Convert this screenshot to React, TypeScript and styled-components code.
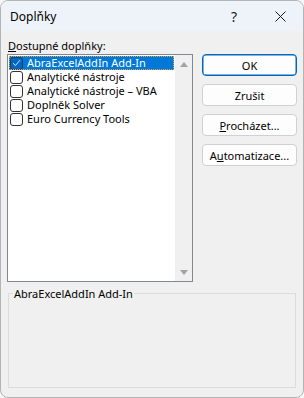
import React from 'react';
import styled, { createGlobalStyle } from 'styled-components';

const GlobalStyle = createGlobalStyle`
   html, body {
      margin: 0;
      padding: 0;
      background: #f7f7f7;
   }
   * {
      box-sizing: border-box;
   }
`;

const Window = styled.div`
   width: 304px;
   height: 398px;
   display: flex;
   flex-direction: column;
   background: #f0f0f0;
   border: 1px solid #b4b4b4;
   border-radius: 8px;
   overflow: hidden;
   font-family: 'Noto Sans', 'Open Sans', sans-serif;
   font-size: 11px;
   color: #000;
`;

const TitleBar = styled.header`
   height: 30px;
   flex: none;
   display: flex;
   align-items: center;
   padding-left: 9px;
   background: #eef3f9;
`;

const Title = styled.span`
   flex: 1;
   font-size: 12px;
`;

const TitleButton = styled.button`
   width: 46px;
   height: 30px;
   display: flex;
   align-items: center;
   justify-content: center;
   border: none;
   background: transparent;
   padding: 0;
   font-family: inherit;
   font-size: 14px;
   color: #1a1a1a;
`;

const Body = styled.div`
   flex: 1;
   display: flex;
   flex-direction: column;
   padding: 8px 7px 9px 6px;
`;

const Main = styled.div`
   display: flex;
   gap: 9px;
`;

const ListColumn = styled.div`
   display: flex;
   flex-direction: column;
`;

const Label = styled.label`
   height: 15px;
   line-height: 14px;
   padding-left: 1px;
`;

const Mnemonic = styled.span`
   text-decoration: underline;
`;

const ListBox = styled.div`
   width: 186px;
   height: 228px;
   display: flex;
   border: 1px solid #828790;
   background: #fff;
`;

const Items = styled.ul`
   flex: 1;
   margin: 0;
   padding: 1px 1px 0 1px;
   list-style: none;
`;

const Item = styled.li<{ $selected?: boolean }>`
   height: 14px;
   display: flex;
   align-items: center;
   gap: 4px;
   padding-left: 1px;
   line-height: 14px;
   white-space: nowrap;
   background: ${(p) => (p.$selected ? '#0078d7' : 'transparent')};
   color: ${(p) => (p.$selected ? '#fff' : '#000')};
   outline: ${(p) => (p.$selected ? '1px dotted #e8a040' : 'none')};
   outline-offset: -1px;
`;

const Box = styled.span<{ $checked?: boolean }>`
   width: 13px;
   height: 13px;
   flex: none;
   display: flex;
   align-items: center;
   justify-content: center;
   border: 1px solid ${(p) => (p.$checked ? '#1d3d66' : '#333')};
   border-radius: 3px;
   background: ${(p) => (p.$checked ? '#0067c0' : '#fff')};
`;

const ScrollBar = styled.div`
   width: 17px;
   flex: none;
   display: flex;
   flex-direction: column;
   justify-content: space-between;
   align-items: center;
   padding: 7px 0 6px;
   background: #f0f0f0;
`;

const Arrow = styled.span<{ $down?: boolean }>`
   width: 0;
   height: 0;
   border-left: 4px solid transparent;
   border-right: 4px solid transparent;
   ${(p) =>
      p.$down
         ? 'border-top: 5px solid #a3a3a3;'
         : 'border-bottom: 5px solid #a3a3a3;'}
`;

const Buttons = styled.div`
   display: flex;
   flex-direction: column;
   gap: 8px;
   padding-top: 15px;
`;

const Button = styled.button<{ $default?: boolean }>`
   width: 95px;
   height: 22px;
   padding: 0;
   border: 1px solid ${(p) => (p.$default ? '#0067c0' : '#d0d0d0')};
   box-shadow: ${(p) => (p.$default ? 'inset 0 0 0 0.5px #0067c0' : 'none')};
   border-radius: 4px;
   background: #fdfdfd;
   font-family: inherit;
   font-size: 11px;
   color: #000;
`;

const Group = styled.fieldset`
   margin: 5px 0 0 1px;
   height: 101px;
   padding: 0;
   border: 1px solid #dcdcdc;
`;

const Legend = styled.legend`
   margin-left: 4px;
   padding: 0 1px;
   line-height: 13px;
`;

const Check = () => (
   <svg width="9" height="8" viewBox="0 0 9 8">
      <path d="M1 4.2 L3.4 6.5 L8 1.2" fill="none" stroke="#d8e8f8" strokeWidth="1" />
   </svg>
);

const Close = () => (
   <svg width="11" height="11" viewBox="0 0 11 11">
      <path d="M0.5 0.5 L10.5 10.5 M10.5 0.5 L0.5 10.5" stroke="#1a1a1a" strokeWidth="1" />
   </svg>
);

const addIns = [
   'AbraExcelAddIn Add-In',
   'Analytické nástroje',
   'Analytické nástroje – VBA',
   'Doplněk Solver',
   'Euro Currency Tools',
];

const App: React.FC = () => (
   <>
      <GlobalStyle />
      <Window>
         <TitleBar>
            <Title>Doplňky</Title>
            <TitleButton>?</TitleButton>
            <TitleButton>
               <Close />
            </TitleButton>
         </TitleBar>
         <Body>
            <Main>
               <ListColumn>
                  <Label>
                     <Mnemonic>D</Mnemonic>ostupné doplňky:
                  </Label>
                  <ListBox>
                     <Items>
                        {addIns.map((name, i) => (
                           <Item key={name} $selected={i === 0}>
                              <Box $checked={i === 0}>{i === 0 && <Check />}</Box>
                              {name}
                           </Item>
                        ))}
                     </Items>
                     <ScrollBar>
                        <Arrow />
                        <Arrow $down />
                     </ScrollBar>
                  </ListBox>
               </ListColumn>
               <Buttons>
                  <Button $default>OK</Button>
                  <Button>Zrušit</Button>
                  <Button>
                     <Mnemonic>P</Mnemonic>rocházet...
                  </Button>
                  <Button>
                     A<Mnemonic>u</Mnemonic>tomatizace...
                  </Button>
               </Buttons>
            </Main>
            <Group>
               <Legend>AbraExcelAddIn Add-In</Legend>
            </Group>
         </Body>
      </Window>
   </>
);

export default App;
